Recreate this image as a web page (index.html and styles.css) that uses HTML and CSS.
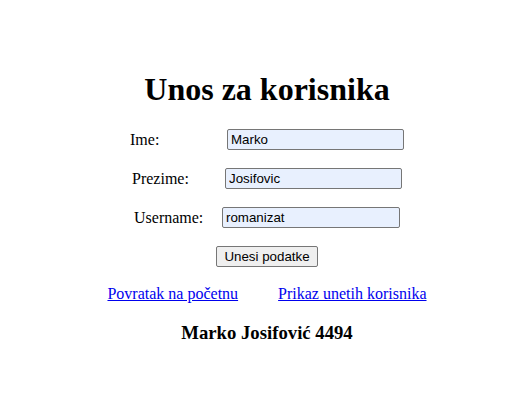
FILE: index.html
```html
<!DOCTYPE html>
<html>
<head>
<meta charset="utf-8">
<link rel="stylesheet" href="styles.css">
</head>
<body>
<div class="page">
  <h1 class="title">Unos za korisnika</h1>
  <form class="form">
    <div class="row row-ime">
      <label class="lbl">Ime:</label>
      <input class="field" type="text" value="Marko">
    </div>
    <div class="row row-prezime">
      <label class="lbl">Prezime:</label>
      <input class="field" type="text" value="Josifovic">
    </div>
    <div class="row row-user">
      <label class="lbl">Username:</label>
      <input class="field" type="text" value="romanizat">
    </div>
    <div class="row">
      <button class="btn" type="button">Unesi podatke</button>
    </div>
  </form>
  <div class="links">
    <a href="#">Povratak na početnu</a>
    <a href="#">Prikaz unetih korisnika</a>
  </div>
  <h3 class="author">Marko Josifović 4494</h3>
</div>
</body>
</html>
```
FILE: styles.css
```css
html, body {
  margin: 0;
  padding: 0;
  background: #ffffff;
}
body {
  font-family: "Liberation Serif", "Times New Roman", serif;
  font-size: 16px;
  color: #000;
}
.page {
  padding: 8px 0 0 20px;
  display: flex;
  flex-direction: column;
  align-items: center;
}
.title {
  font-size: 32px;
  font-weight: bold;
  margin: 63px 0 0 0;
  line-height: 37px;
}
.form {
  display: flex;
  flex-direction: column;
  align-items: center;
  gap: 18px;
  margin-top: 21px;
}
.row {
  display: flex;
  align-items: center;
}
.lbl {
  display: block;
}
.row-ime .lbl { width: 97px; }
.row-prezime .lbl { width: 93px; }
.row-user .lbl { width: 88px; }
.field {
  box-sizing: border-box;
  width: 177px;
  height: 21px;
  font-family: "Liberation Sans", Arial, sans-serif;
  font-size: 13.33px;
  padding: 1px 3px;
  border: 1px solid #767676;
  border-radius: 2px;
  background: #e8f0fe;
  color: #000;
}
.row-user .field { width: 178px; }
.btn {
  box-sizing: border-box;
  height: 21px;
  font-family: "Liberation Sans", Arial, sans-serif;
  font-size: 13.33px;
  padding: 1px 7px;
  border: 1px solid #767676;
  border-radius: 2px;
  background: #efefef;
  color: #000;
}
.links {
  display: flex;
  gap: 40px;
  margin-top: 18px;
}
.links a {
  color: #0000ee;
  text-decoration: underline;
}
.author {
  font-size: 18.72px;
  font-weight: bold;
  margin: 19px 0 0 0;
}
```
